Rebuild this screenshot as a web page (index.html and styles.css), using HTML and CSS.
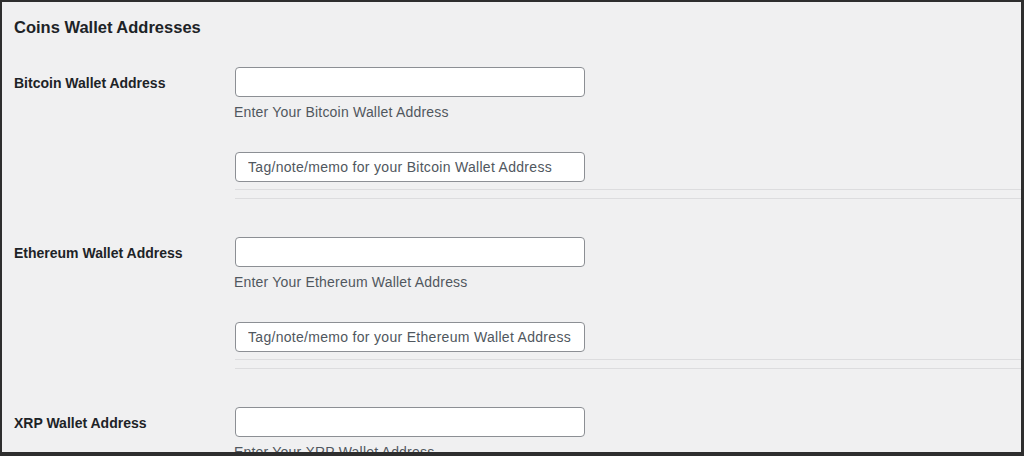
FILE: index.html
```html
<!DOCTYPE html>
<html lang="en">
<head>
    <meta charset="UTF-8">
    <meta name="viewport" content="width=device-width, initial-scale=1.0">
    <title>Coins Wallet Addresses</title>
    <link rel="stylesheet" href="styles.css">
</head>
<body>

    <div class="frame">
        <h2>Coins Wallet Addresses</h2>

        <div class="row">
            <label class="field-label" for="btc">Bitcoin Wallet Address</label>
            <div class="field">
                <input type="text" id="btc">
                <p class="description">Enter Your Bitcoin Wallet Address</p>
                <input type="text" class="tag" placeholder="Tag/note/memo for your Bitcoin Wallet Address">
                <hr>
            </div>
        </div>

        <div class="row">
            <label class="field-label" for="eth">Ethereum Wallet Address</label>
            <div class="field">
                <input type="text" id="eth">
                <p class="description">Enter Your Ethereum Wallet Address</p>
                <input type="text" class="tag" placeholder="Tag/note/memo for your Ethereum Wallet Address">
                <hr>
            </div>
        </div>

        <div class="row">
            <label class="field-label" for="xrp">XRP Wallet Address</label>
            <div class="field">
                <input type="text" id="xrp">
                <p class="description">Enter Your XRP Wallet Address</p>
                <input type="text" class="tag" placeholder="Tag/note/memo for your XRP Wallet Address">
                <hr>
            </div>
        </div>
    </div>

</body>
</html>
```

FILE: styles.css
```css
body {
    margin: 0;
    font-family: "Liberation Sans", Arial, sans-serif;
    color: #1d2327;
    background: #f0f0f1;
}
.frame {
    box-sizing: border-box;
    height: 456px;
    overflow: hidden;
    padding-left: 12px;
    border: 2px solid #2e2e2e;
    border-right-width: 3px;
    border-bottom-width: 4px;
    background: #f0f0f1;
}
h2 {
    margin: 13px 0 0;
    font-size: 16.5px;
    line-height: 24px;
    font-weight: bold;
}
.row {
    display: flex;
    margin-top: 38px;
}
h2 + .row {
    margin-top: 28px;
}
.field-label {
    width: 221px;
    flex-shrink: 0;
    padding-top: 1px;
    font-size: 14px;
    font-weight: bold;
    line-height: 30px;
}
.field {
    flex: 1;
}
input {
    display: block;
    box-sizing: border-box;
    width: 350px;
    height: 30px;
    margin: 0;
    padding: 0 12px;
    border: 1px solid #8c8f94;
    border-radius: 4px;
    background: #fff;
    font-family: inherit;
    font-size: 14px;
    letter-spacing: 0.3px;
    color: #2c3338;
}
input::placeholder {
    color: #50575e;
}
.description {
    margin: 5px 0 0 -1px;
    font-size: 14px;
    letter-spacing: 0.2px;
    line-height: 20px;
    color: #50575e;
}
.tag {
    margin-top: 30px;
}
hr {
    margin: 7px 0 0;
    height: 8px;
    border: 0;
    border-top: 1px solid #dcdcde;
    border-bottom: 1px solid #dcdcde;
}
```
